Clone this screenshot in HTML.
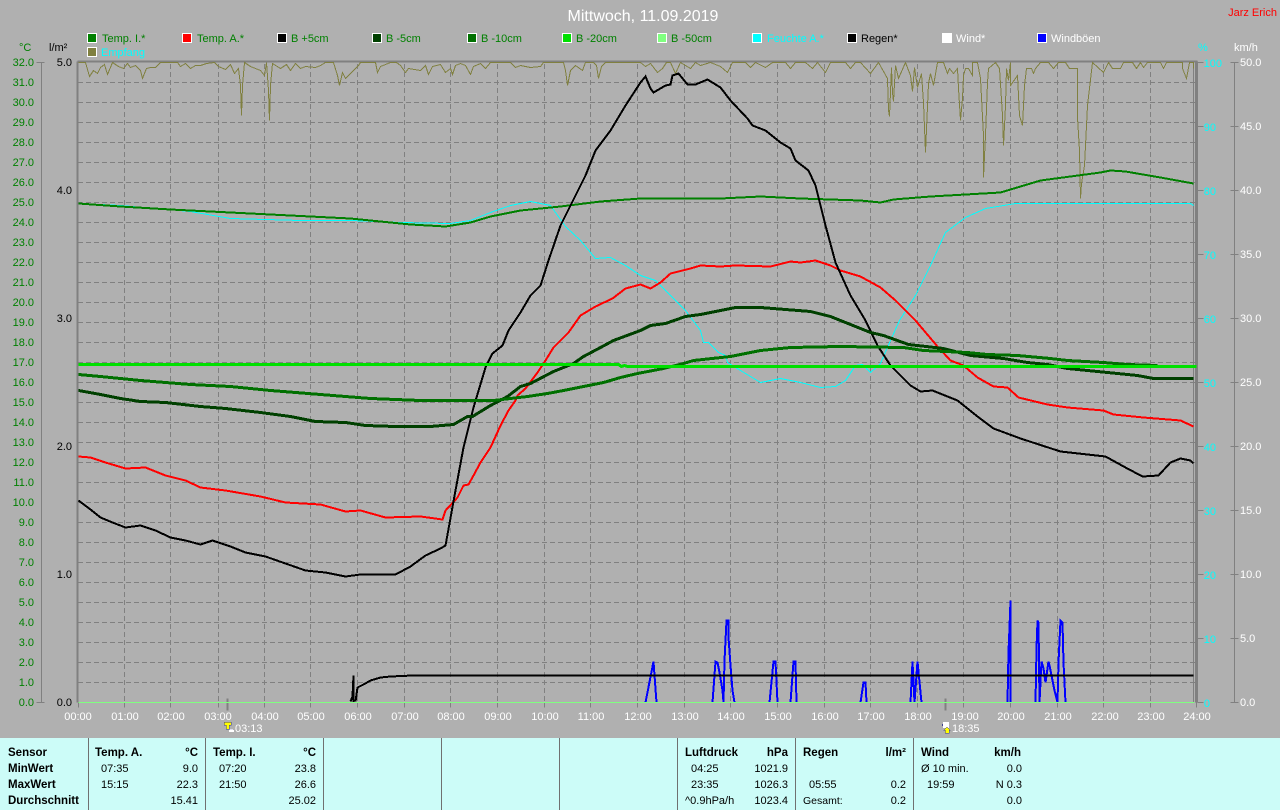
<!DOCTYPE html>
<html><head><meta charset="utf-8"><title>Mittwoch, 11.09.2019</title>
<style>
html,body{margin:0;padding:0;background:#b0b0b0}
body{width:1280px;height:810px;overflow:hidden;position:relative}
svg{position:absolute;left:0;top:0;display:block}
text{font-family:"Liberation Sans",Arial,sans-serif;font-size:11px}
.e{text-anchor:end}
.m{text-anchor:middle}
.b{font-weight:bold;fill:#000;font-size:11.5px}
.t{fill:#000}
</style></head><body>
<svg width="1280" height="810" viewBox="0 0 1280 810" xmlns="http://www.w3.org/2000/svg">
<defs>
<pattern id="gh" patternUnits="userSpaceOnUse" x="78" y="82" width="8" height="20"><rect x="0" y="0" width="5" height="1" fill="#808080" shape-rendering="crispEdges"/></pattern>
<pattern id="gv" patternUnits="userSpaceOnUse" x="0" y="64" width="1280" height="8"><rect x="0" y="0" width="1280" height="5" fill="#808080" shape-rendering="crispEdges"/></pattern>
</defs>
<rect width="1280" height="810" fill="#b0b0b0"/>
<text x="643" y="21" class="m" fill="#fff" style="font-size:16px">Mittwoch, 11.09.2019</text>
<text x="1277" y="16" class="e" fill="#f00" style="font-size:11px">Jarz Erich</text>
<rect x="78" y="82" width="1118" height="601" fill="url(#gh)" shape-rendering="crispEdges"/>
<g fill="url(#gv)" shape-rendering="crispEdges">
<rect x="124" y="62" width="1" height="640"/><rect x="170" y="62" width="1" height="640"/><rect x="218" y="62" width="1" height="640"/><rect x="264" y="62" width="1" height="640"/><rect x="310" y="62" width="1" height="640"/><rect x="357" y="62" width="1" height="640"/><rect x="404" y="62" width="1" height="640"/><rect x="450" y="62" width="1" height="640"/><rect x="497" y="62" width="1" height="640"/><rect x="544" y="62" width="1" height="640"/><rect x="590" y="62" width="1" height="640"/><rect x="637" y="62" width="1" height="640"/><rect x="684" y="62" width="1" height="640"/><rect x="730" y="62" width="1" height="640"/><rect x="777" y="62" width="1" height="640"/><rect x="824" y="62" width="1" height="640"/><rect x="870" y="62" width="1" height="640"/><rect x="917" y="62" width="1" height="640"/><rect x="963" y="62" width="1" height="640"/><rect x="1010" y="62" width="1" height="640"/><rect x="1057" y="62" width="1" height="640"/><rect x="1103" y="62" width="1" height="640"/><rect x="1150" y="62" width="1" height="640"/>
</g>
<g transform="translate(.5 .5)" fill="none" shape-rendering="crispEdges">
<path stroke="#808080" d="M78 702V707M124 702V707M170 702V707M218 702V707M264 702V707M310 702V707M357 702V707M404 702V707M450 702V707M497 702V707M544 702V707M590 702V707M637 702V707M684 702V707M730 702V707M777 702V707M824 702V707M870 702V707M917 702V707M963 702V707M1010 702V707M1057 702V707M1103 702V707M1150 702V707M1196 702V707"/>
<!-- axes -->
<path stroke="#808080" d="M41 62V702M36 62H44M36 702H44M1234 62V702M1230 62H1238M1230 702H1238M1197 62H1203M1197 126H1203M1197 190H1203M1197 254H1203M1197 318H1203M1197 382H1203M1197 446H1203M1197 510H1203M1197 574H1203M1197 638H1203M1197 702H1203M1230 126H1238M1230 190H1238M1230 254H1238M1230 318H1238M1230 382H1238M1230 446H1238M1230 510H1238M1230 574H1238M1230 638H1238"/>
<path stroke="#808080" stroke-width="2" d="M227 698V710M945 698V710"/>
<!-- frame -->
<path stroke="#808080" stroke-width="2" d="M77 61H1197M77 61V702"/>
<path stroke="#808080" stroke-width="3" d="M1196 61V702"/>
<path stroke="#808080" d="M1193 68V702"/>
<!-- olive Empfang -->
<path stroke="#808040" d="M78 62L85 62L89 76L93 70L97 73L100 67L104 64L107 74L112 62L118 66L123 68L127 63L130 67L135 65L140 70L142 78L146 68L150 67L155 67L160 62L177 62L180 66L185 63L190 68L195 65L200 65L206 63L214 62L218 66L225 69L230 64L234 73L238 68L240 85L241 115L242 85L244 62L250 66L260 70L264 75L266 62L268 90L269 120L270 85L272 63L280 68L286 64L290 70L295 63L300 68L305 66L315 67L320 65L325 62L333 62L337 75L339 85L342 72L345 78L352 71L358 65L360 62L375 62L377 72L380 66L390 62L396 62L400 65L405 72L408 68L420 70L425 65L428 74L432 66L440 64L445 72L450 68L452 74L455 65L460 63L465 65L470 74L473 66L480 63L485 68L490 62L510 62L515 67L520 65L530 67L540 66L543 62L563 62L565 70L567 85L570 70L575 65L582 70L585 62L593 62L596 65L598 78L601 66L605 62L640 62L645 66L650 63L657 72L662 68L666 62L670 62L675 73L680 62L690 68L695 62L700 65L710 62L720 66L727 72L732 62L745 62L750 67L755 62L765 67L772 62L785 62L790 68L795 62L805 62L812 68L817 62L825 72L830 62L845 62L850 68L855 62L860 62L870 73L878 62L887 78L888 110L889 116L891 67L892 92L893 101L895 65L898 78L905 62L910 75L912 91L914 67L917 87L921 73L923 102L925 152L928 83L930 73L933 85L937 62L943 62L947 73L949 68L953 73L957 68L958 88L960 120L962 98L963 75L965 68L968 68L972 75L972 62L977 62L980 78L983 135L983 177L985 135L987 82L988 68L995 62L999 68L1002 115L1003 145L1005 105L1006 68L1008 80L1010 62L1010 85L1017 75L1019 115L1022 125L1024 85L1026 68L1031 68L1033 73L1035 68L1040 62L1048 62L1053 68L1058 62L1065 62L1069 68L1077 68L1077 117L1079 150L1080 198L1081 183L1084 165L1087 105L1092 62L1103 72L1108 62L1112 68L1120 68L1123 62L1132 62L1136 68L1140 62L1143 67L1147 62L1160 62L1163 68L1166 62L1182 62L1182 68L1186 78L1189 62L1193 62L1193 68"/>
<!-- cyan Feuchte -->
<path stroke="#00ffff" d="M78 203L120 205L190 211L230 218L300 220L350 220L400 222L450 223L470 220L490 212L510 205L530 201L550 205L565 226L580 240L595 258L610 257L625 265L640 275L655 280L670 295L685 310L700 330L703 342L708 342L718 352L725 355L727 362L740 370L760 382L780 378L800 382L820 387L835 386L845 380L855 365L862 364L870 372L880 363L890 340L899 320L915 295L930 265L945 232L965 217L985 208L1015 203L1190 203L1193 205"/>
<!-- Temp I -->
<path stroke="#008000" stroke-width="2" d="M78 203L120 206L170 209L230 212L290 215L350 218L390 222L410 224L445 226L470 222L490 216L520 210L560 206L600 201L640 198L720 198L760 196L800 198L860 200L880 202L893 199L930 196L1000 192L1010 189L1030 183L1040 180L1100 172L1110 170L1125 171L1160 177L1193 183"/>
<!-- red -->
<path stroke="#ff0000" stroke-width="2" d="M78 456L90 457L105 462L125 468L145 467L165 475L185 480L200 487L225 490L260 496L285 502L320 504L345 511L360 510L385 517L420 516L442 519L445 510L457 497L463 485L468 484L473 475L480 462L490 447L500 425L508 410L515 400L517 395L525 388L537 372L545 360L553 347L568 332L580 315L595 306L612 298L625 288L640 284L650 288L660 282L670 273L690 268L700 265L720 266L735 265L770 266L790 261L800 262L815 260L830 265L840 270L860 276L880 287L895 300L915 320L937 346L950 360L963 365L977 377L993 386L1007 387L1018 397L1047 404L1067 407L1103 410L1113 414L1143 417L1180 420L1193 426"/>
<!-- black B+5 -->
<path stroke="#000" stroke-width="2" d="M78 500L90 509L100 517L112 522L125 527L140 525L155 530L170 537L185 540L200 544L212 540L230 546L245 552L265 556L285 563L305 570L325 572L345 576L360 574L395 574L410 566L425 555L440 548L445 545L455 490L463 447L473 407L485 367L492 353L502 345L508 330L520 312L530 295L540 285L548 260L560 225L575 195L585 175L595 150L610 130L625 105L640 82L645 76L650 88L653 92L665 85L670 84L672 75L678 73L687 84L695 84L707 79L720 87L730 100L747 118L752 125L765 130L780 142L790 148L795 160L808 170L815 185L825 225L835 262L850 295L865 320L877 345L890 365L910 385L920 391L932 390L957 400L977 416L993 428L1020 438L1060 451L1105 456L1125 467L1142 476L1158 475L1170 462L1180 458L1190 460L1193 463"/>
<!-- B-5 -->
<path stroke="#004000" stroke-width="3" d="M78 390L100 394L120 398L140 401L165 402L200 406L225 408L260 412L290 416L315 421L345 422L365 425L395 426L430 426L453 424L467 416L472 416L490 405L507 396L520 386L530 383L553 371L573 363L583 356L600 347L613 340L640 330L650 325L665 323L685 316L700 314L720 310L735 307L760 307L785 309L810 311L830 316L850 324L870 332L883 335L908 344L943 348L970 355L1003 358L1027 362L1047 364L1067 368L1107 372L1137 375L1153 378L1193 378"/>
<!-- B-10 -->
<path stroke="#007000" stroke-width="3" d="M78 374L100 376L140 380L190 384L230 386L270 390L320 394L370 398L420 400L493 400L510 398L527 396L547 393L563 390L583 386L603 382L620 377L637 373L663 368L683 363L693 360L730 356L760 350L790 347L840 346L903 347L923 350L967 352L987 354L1017 355L1050 358L1067 360L1103 362L1127 364L1157 365"/>
<!-- blue -->
<path stroke="#0000ff" stroke-width="2" d="M645 702L653 661L656 702M712 702L715 661L717 662L719 672L722 690L723 702L724 660L725 640L726 620L728 620L728 637L730 665L732 690L734 702M769 702L773 661L775 661L777 702M790 702L793 661L795 661L796 702M860 702L863 682L865 682L866 702M910 702L912 661L914 702L917 661L921 702M1007 702L1008 651L1009 627L1010 600L1010 702M1035 702L1036 648L1037 620L1038 622L1039 702L1041 661L1043 668L1045 682L1047 668L1048 661L1049 665L1052 680L1054 690L1057 702L1058 662L1060 620L1062 622L1063 662L1065 702"/>
<!-- rain -->
<path stroke="#000" stroke-width="2" d="M350 701L352 696L353 675V702M355 701L357 687L363 684L370 680L380 677L390 676L412 675L1193 675"/>
<!-- B-20 -->
<path stroke="#00e000" stroke-width="3" d="M78 364L618 364L621 366L624 365L627 366L1196 366"/>
<!-- B-50 -->
<path stroke="#80ff80" d="M78 702H1194"/>
<!-- legend swatches -->
<g stroke="#fff">
<rect x="87" y="33" width="9" height="9" fill="#008000"/>
<rect x="182" y="33" width="9" height="9" fill="#ff0000"/>
<rect x="277" y="33" width="9" height="9" fill="#000"/>
<rect x="372" y="33" width="9" height="9" fill="#004000"/>
<rect x="467" y="33" width="9" height="9" fill="#007000"/>
<rect x="562" y="33" width="9" height="9" fill="#00e000"/>
<rect x="657" y="33" width="9" height="9" fill="#80ff80"/>
<rect x="752" y="33" width="9" height="9" fill="#00ffff"/>
<rect x="847" y="33" width="9" height="9" fill="#000"/>
<rect x="942" y="33" width="9" height="9" fill="#fff"/>
<rect x="1037" y="33" width="9" height="9" fill="#0000ff"/>
<rect x="87" y="47" width="9" height="9" fill="#808040"/>
</g>
</g>
<!-- legend text -->
<text x="102" y="42" fill="#008000">Temp. I.*</text>
<text x="197" y="42" fill="#008000">Temp. A.*</text>
<text x="291" y="42" fill="#008000">B +5cm</text>
<text x="386" y="42" fill="#008000">B -5cm</text>
<text x="481" y="42" fill="#008000">B -10cm</text>
<text x="576" y="42" fill="#008000">B -20cm</text>
<text x="671" y="42" fill="#008000">B -50cm</text>
<text x="767" y="42" fill="#00ffff">Feuchte A.*</text>
<text x="861" y="42" fill="#000">Regen*</text>
<text x="956" y="42" fill="#fff">Wind*</text>
<text x="1051" y="42" fill="#fff">Windböen</text>
<text x="101" y="56" fill="#00ffff">Empfang</text>
<!-- axis headers -->
<text x="19" y="51" fill="#008000">°C</text>
<text x="49" y="51" fill="#000">l/m²</text>
<text x="1198" y="51" fill="#00ffff">%</text>
<text x="1234" y="51" fill="#fff">km/h</text>
<!-- left scale -->
<g fill="#008000" class="e">
<text x="34" y="66">32.0</text><text x="34" y="86">31.0</text><text x="34" y="106">30.0</text><text x="34" y="126">29.0</text><text x="34" y="146">28.0</text><text x="34" y="166">27.0</text><text x="34" y="186">26.0</text><text x="34" y="206">25.0</text><text x="34" y="226">24.0</text><text x="34" y="246">23.0</text><text x="34" y="266">22.0</text><text x="34" y="286">21.0</text><text x="34" y="306">20.0</text><text x="34" y="326">19.0</text><text x="34" y="346">18.0</text><text x="34" y="366">17.0</text><text x="34" y="386">16.0</text><text x="34" y="406">15.0</text><text x="34" y="426">14.0</text><text x="34" y="446">13.0</text><text x="34" y="466">12.0</text><text x="34" y="486">11.0</text><text x="34" y="506">10.0</text><text x="34" y="526">9.0</text><text x="34" y="546">8.0</text><text x="34" y="566">7.0</text><text x="34" y="586">6.0</text><text x="34" y="606">5.0</text><text x="34" y="626">4.0</text><text x="34" y="646">3.0</text><text x="34" y="666">2.0</text><text x="34" y="686">1.0</text><text x="34" y="706">0.0</text>
</g>
<g fill="#000" class="e">
<text x="72" y="66">5.0</text><text x="72" y="194">4.0</text><text x="72" y="322">3.0</text><text x="72" y="450">2.0</text><text x="72" y="578">1.0</text><text x="72" y="706">0.0</text>
</g>
<g fill="#00ffff" class="e">
<text x="1222" y="67">100</text><text x="1216" y="131">90</text><text x="1216" y="195">80</text><text x="1216" y="259">70</text><text x="1216" y="323">60</text><text x="1216" y="387">50</text><text x="1216" y="451">40</text><text x="1216" y="515">30</text><text x="1216" y="579">20</text><text x="1216" y="643">10</text><text x="1210" y="707">0</text>
</g>
<g fill="#fff">
<text x="1240" y="66">50.0</text><text x="1240" y="130">45.0</text><text x="1240" y="194">40.0</text><text x="1240" y="258">35.0</text><text x="1240" y="322">30.0</text><text x="1240" y="386">25.0</text><text x="1240" y="450">20.0</text><text x="1240" y="514">15.0</text><text x="1240" y="578">10.0</text><text x="1240" y="642">5.0</text><text x="1240" y="706">0.0</text>
</g>
<!-- hours -->
<g fill="#fff" class="m">
<text x="78" y="720">00:00</text><text x="125" y="720">01:00</text><text x="171" y="720">02:00</text><text x="218" y="720">03:00</text><text x="265" y="720">04:00</text><text x="311" y="720">05:00</text><text x="358" y="720">06:00</text><text x="405" y="720">07:00</text><text x="451" y="720">08:00</text><text x="498" y="720">09:00</text><text x="545" y="720">10:00</text><text x="591" y="720">11:00</text><text x="638" y="720">12:00</text><text x="685" y="720">13:00</text><text x="731" y="720">14:00</text><text x="778" y="720">15:00</text><text x="825" y="720">16:00</text><text x="871" y="720">17:00</text><text x="918" y="720">18:00</text><text x="965" y="720">19:00</text><text x="1011" y="720">20:00</text><text x="1058" y="720">21:00</text><text x="1105" y="720">22:00</text><text x="1151" y="720">23:00</text><text x="1197" y="720">24:00</text>
</g>
<!-- sun icons -->
<g shape-rendering="crispEdges">
<path d="M224 722h7v3h-2v4h-3v-4h-2z" fill="#ffff00" stroke="#404080" stroke-width=".5"/>
<rect x="229" y="730" width="5" height="2" fill="#fff"/><rect x="230" y="729" width="3" height="1" fill="#dde"/>
<rect x="943" y="722" width="6" height="6" fill="#fff"/><rect x="942" y="724" width="1" height="2" fill="#404090"/>
<path d="M945 733v-3h-1l3-3 3 3h-1v3z" fill="#ffff00" stroke="#404080" stroke-width=".5"/>
</g>
<text x="235" y="732" fill="#fff">03:13</text>
<text x="952" y="732" fill="#fff">18:35</text>
<!-- table -->
<rect x="0" y="738" width="1280" height="72" fill="#ccfcf8"/>
<g fill="#707070" shape-rendering="crispEdges">
<rect x="88" y="738" width="1" height="72"/><rect x="205" y="738" width="1" height="72"/><rect x="323" y="738" width="1" height="72"/><rect x="441" y="738" width="1" height="72"/><rect x="559" y="738" width="1" height="72"/><rect x="677" y="738" width="1" height="72"/><rect x="795" y="738" width="1" height="72"/><rect x="913" y="738" width="1" height="72"/>
</g>
<text class="b" x="8" y="756">Sensor</text><text class="b" x="8" y="772">MinWert</text><text class="b" x="8" y="788">MaxWert</text><text class="b" x="8" y="804">Durchschnitt</text>
<text class="b" x="95" y="756">Temp. A.</text><text class="b e" x="198" y="756">°C</text>
<text class="t" x="101" y="772">07:35</text><text class="t e" x="198" y="772">9.0</text>
<text class="t" x="101" y="788">15:15</text><text class="t e" x="198" y="788">22.3</text>
<text class="t e" x="198" y="804">15.41</text>
<text class="b" x="213" y="756">Temp. I.</text><text class="b e" x="316" y="756">°C</text>
<text class="t" x="219" y="772">07:20</text><text class="t e" x="316" y="772">23.8</text>
<text class="t" x="219" y="788">21:50</text><text class="t e" x="316" y="788">26.6</text>
<text class="t e" x="316" y="804">25.02</text>
<text class="b" x="685" y="756">Luftdruck</text><text class="b e" x="788" y="756">hPa</text>
<text class="t" x="691" y="772">04:25</text><text class="t e" x="788" y="772">1021.9</text>
<text class="t" x="691" y="788">23:35</text><text class="t e" x="788" y="788">1026.3</text>
<text class="t" x="685" y="804">^0.9hPa/h</text><text class="t e" x="788" y="804">1023.4</text>
<text class="b" x="803" y="756">Regen</text><text class="b e" x="906" y="756">l/m²</text>
<text class="t" x="809" y="788">05:55</text><text class="t e" x="906" y="788">0.2</text>
<text class="t" x="803" y="804" style="font-size:10.5px">Gesamt:</text><text class="t e" x="906" y="804">0.2</text>
<text class="b" x="921" y="756">Wind</text><text class="b e" x="1021" y="756">km/h</text>
<text class="t" x="921" y="772">Ø 10 min.</text><text class="t e" x="1022" y="772">0.0</text>
<text class="t" x="927" y="788">19:59</text><text class="t e" x="1022" y="788">N 0.3</text>
<text class="t e" x="1022" y="804">0.0</text>
</svg>
</body></html>
